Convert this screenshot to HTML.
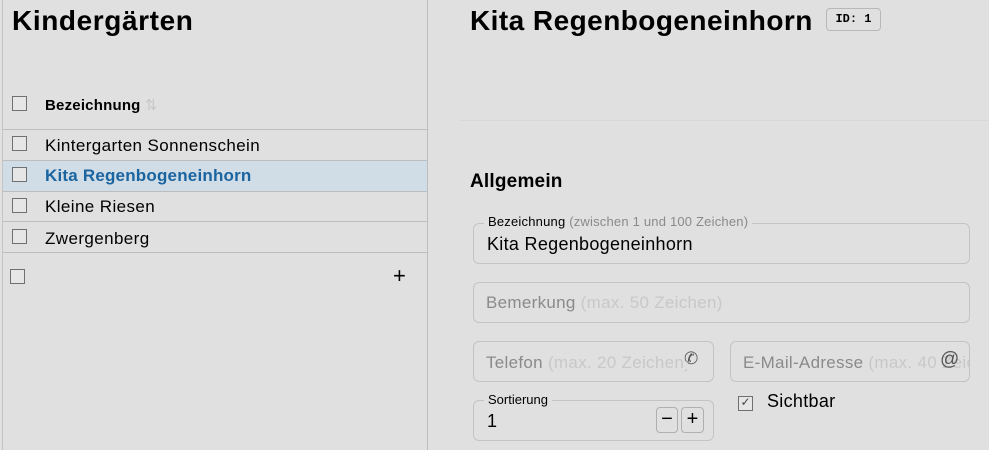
<!DOCTYPE html>
<html><head><meta charset="utf-8"><style>
*{box-sizing:border-box;margin:0;padding:0}
body{width:989px;height:450px;background:#e0e0e0;font-family:"Liberation Sans",sans-serif;position:relative;overflow:hidden;color:#000}
.a{position:absolute}
.cb{position:absolute;width:15px;height:15px;border:1.5px solid #707070;background:#e6e6e6}
.hl{position:absolute;left:3px;width:424px;height:1px;background:#bdbdbd}
.t{position:absolute;left:45px;font-size:17px;letter-spacing:0.4px;white-space:nowrap}
.box{position:absolute;border:1px solid #c4c4c4;border-radius:6px}
.ph{position:absolute;font-size:17px;letter-spacing:0.3px;color:#8a8a8a;white-space:nowrap}
.ph span{color:#c8c8c8}
.lbl{position:absolute;font-size:13px;background:#e0e0e0;padding:0 4px;white-space:nowrap}
</style></head><body>
<div class="a" style="left:2px;top:0;width:1px;height:450px;background:#c4c4c4"></div>
<div class="a" style="left:427px;top:0;width:1px;height:450px;background:#bdbdbd"></div>
<div class="a" style="left:12px;top:5px;font-size:28px;letter-spacing:0.6px;font-weight:bold">Kindergärten</div>
<div class="cb" style="left:12px;top:96px"></div>
<div class="t" style="top:96px;font-size:15px;letter-spacing:0.2px;font-weight:bold">Bezeichnung <span style="color:#c8c8c8;font-weight:normal">⇅</span></div>
<div class="hl" style="top:129px"></div>
<div class="cb" style="left:12px;top:136px"></div><div class="t" style="top:136px">Kintergarten Sonnenschein</div>
<div class="hl" style="top:160px"></div>
<div class="a" style="left:3px;top:161px;width:424px;height:30px;background:#d0dce6"></div>
<div class="cb" style="left:12px;top:167px"></div><div class="t" style="top:166px;color:#1a64a0;font-weight:bold;letter-spacing:0.2px">Kita Regenbogeneinhorn</div>
<div class="hl" style="top:191px"></div>
<div class="cb" style="left:12px;top:198px"></div><div class="t" style="top:197px">Kleine Riesen</div>
<div class="hl" style="top:221px"></div>
<div class="cb" style="left:12px;top:229px"></div><div class="t" style="top:229px">Zwergenberg</div>
<div class="hl" style="top:252px"></div>
<div class="cb" style="left:10px;top:269px"></div>
<div class="a" style="left:393px;top:263px;font-size:22px">+</div>

<div class="a" style="left:470px;top:5px;font-size:28px;letter-spacing:0.45px;font-weight:bold;white-space:nowrap">Kita Regenbogeneinhorn</div>
<div class="a" style="left:826px;top:8px;width:55px;height:23px;border:1px solid #b8b8b8;border-radius:4px;font-family:'Liberation Mono',monospace;font-size:12px;font-weight:bold;text-align:center;line-height:21px">ID: 1</div>
<div class="a" style="left:460px;top:120px;width:529px;height:1px;background:#d8d8d8"></div>
<div class="a" style="left:470px;top:171px;font-size:19px;letter-spacing:0.2px;font-weight:bold">Allgemein</div>

<div class="box" style="left:473px;top:223px;width:497px;height:41px"></div>
<div class="lbl" style="left:484px;top:214px;letter-spacing:0.2px">Bezeichnung <span style="color:#8a8a8a">(zwischen 1 und 100 Zeichen)</span></div>
<div class="a" style="left:487px;top:234px;font-size:18px;letter-spacing:0.3px">Kita Regenbogeneinhorn</div>

<div class="box" style="left:473px;top:282px;width:497px;height:41px"></div>
<div class="ph" style="left:486px;top:293px">Bemerkung <span>(max. 50 Zeichen)</span></div>

<div class="box" style="left:473px;top:341px;width:241px;height:41px;overflow:hidden"><div class="ph" style="left:12px;top:11px">Telefon <span>(max. 20 Zeichen)</span></div></div>
<div class="a" style="left:684px;top:349px;font-size:17px;color:#555;background:#e0e0e0">✆</div>
<div class="box" style="left:730px;top:341px;width:240px;height:41px;overflow:hidden"><div class="ph" style="left:12px;top:11px">E-Mail-Adresse <span>(max. 40 Zeichen)</span></div></div>
<div class="a" style="left:940px;top:349px;font-size:19px;color:#555">@</div>

<div class="box" style="left:473px;top:400px;width:241px;height:41px"></div>
<div class="lbl" style="left:484px;top:392px">Sortierung</div>
<div class="a" style="left:487px;top:411px;font-size:18px">1</div>
<div class="a" style="left:656px;top:407px;width:22px;height:26px;border:1px solid #b0b0b0;border-radius:4px;text-align:center;font-size:20px;line-height:23px">−</div>
<div class="a" style="left:681px;top:407px;width:23px;height:26px;border:1px solid #b0b0b0;border-radius:4px;text-align:center;font-size:20px;line-height:23px">+</div>
<div class="cb" style="left:738px;top:396px;font-size:12px;line-height:11px;text-align:center;color:#444">✓</div>
<div class="a" style="left:767px;top:391px;font-size:18px;letter-spacing:0.3px">Sichtbar</div>
</body></html>
